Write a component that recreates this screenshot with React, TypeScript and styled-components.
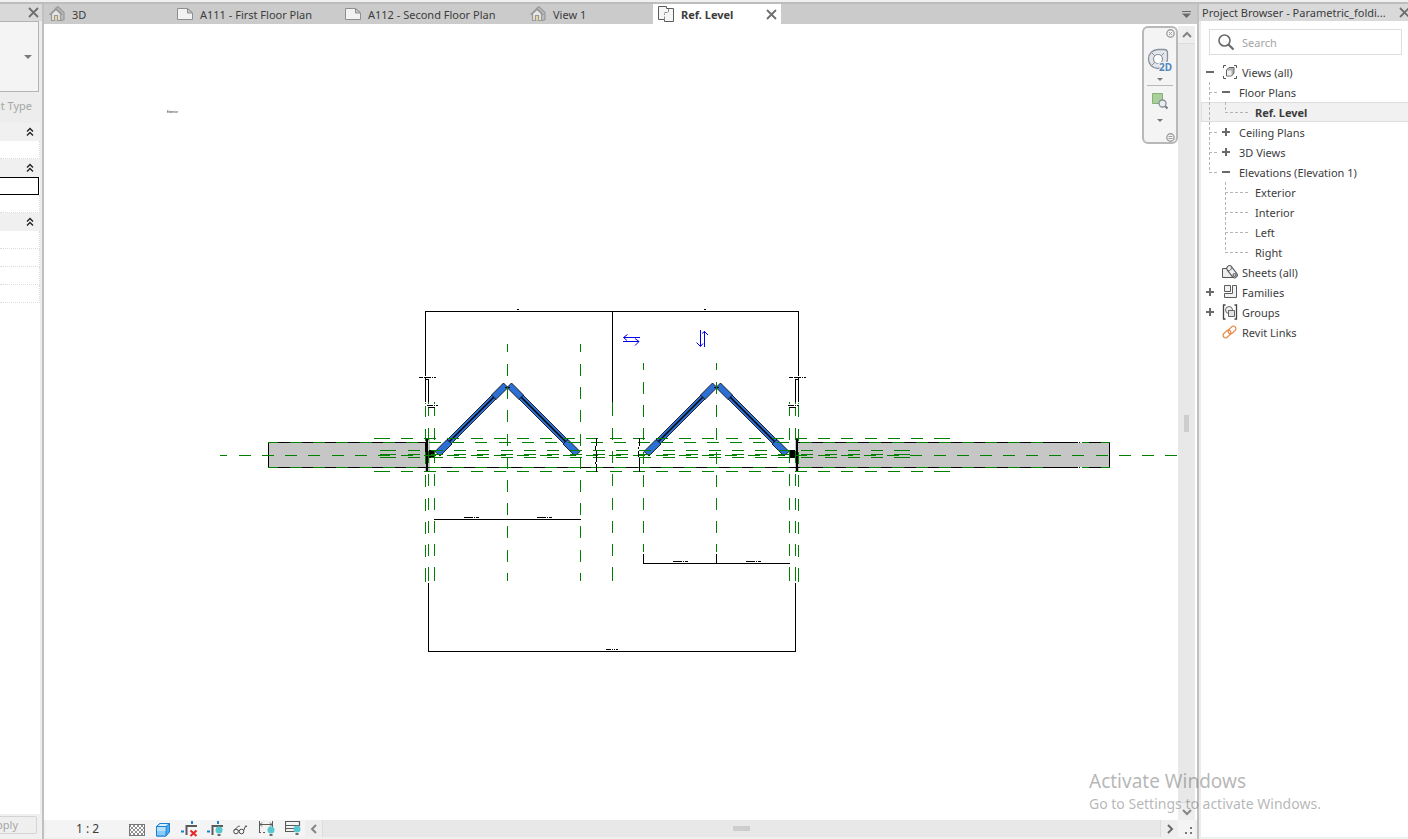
import React from "react";
import styled, { createGlobalStyle, css } from "styled-components";

const GlobalStyle = createGlobalStyle`
  *, *::before, *::after { box-sizing: border-box; }
  body { margin: 0; background: #fff; }
  body, button, input, select {
    font-family: "Noto Sans", "Open Sans", sans-serif;
    font-size: 11px;
    line-height: 16px;
    color: #3c3c3c;
  }
  button { border: 0; padding: 0; background: none; cursor: pointer; }
  ul { list-style: none; margin: 0; padding: 0; }
  svg { display: block; flex: none; }
`;

const Shell = styled.div`
  display: flex;
  flex-direction: column;
  height: 100vh;
  overflow: hidden;
  background: #f0f0f0;
  position: relative;
`;
const TopEdge = styled.div`
  flex: none;
  height: 4px;
  border-top: 2px solid #f0f0f0;
  background: #bdbdbd;
`;
const Columns = styled.div`
  flex: 1;
  display: flex;
  min-height: 0;
`;

/* ---------- left palette ---------- */
const Palette = styled.aside`
  flex: none;
  width: 44px;
  border-right: 2px solid #c0c0c0;
  background: #ededed;
  display: flex;
  flex-direction: column;
  overflow: hidden;
`;
const PaletteTitle = styled.header`
  flex: none;
  height: 17px;
  display: flex;
  justify-content: flex-end;
  align-items: center;
  padding-right: 3px;
  background: #d9d9d9;
`;
const TypeSelector = styled.button`
  flex: none;
  height: 71px;
  width: 39px;
  border: 1px solid #b4b4b4;
  border-left: 0;
  background: #f4f4f4;
  display: flex;
  align-items: center;
  justify-content: flex-end;
  padding-right: 6px;
`;
const EditTypeRow = styled.div`
  flex: none;
  height: 31px;
  display: flex;
  justify-content: flex-end;
  align-items: center;
  padding: 0 10px 4px 0;
`;
const EditType = styled.button`
  flex: none;
  color: #a6a6a6;
  white-space: nowrap;
`;
const Properties = styled.div`
  flex: 1;
  min-height: 0;
  width: 40px;
  background: #fff;
`;
const PropHeader = styled.button`
  display: flex;
  justify-content: flex-end;
  align-items: center;
  width: 100%;
  height: 18px;
  padding-right: 6px;
  background: #f0f0f0;
`;
const PropRow = styled.div`
  height: 18px;
  border-bottom: 1px dotted #dcdcdc;
  border-right: 1px dotted #dcdcdc;
`;
const PropInput = styled.input`
  display: block;
  width: 39px;
  height: 18px;
  border: 1px solid #000;
  border-left: 0;
  padding: 0;
  background: #fff;
`;
const PaletteFooter = styled.footer`
  flex: none;
  height: 25px;
  display: flex;
  justify-content: flex-end;
  align-items: flex-start;
  padding: 2px 5px 0 0;
  background: #f0f0f0;
`;
const ApplyButton = styled.button`
  flex: none;
  width: 75px;
  height: 18px;
  padding-right: 18px;
  text-align: right;
  border: 1px solid #d4d4d4;
  border-radius: 2px;
  background: #efefef;
  color: #a6a6a6;
`;

/* ---------- document area ---------- */
const Workspace = styled.main`
  flex: 1;
  min-width: 0;
  display: flex;
  flex-direction: column;
  background: #fff;
`;
const TabBar = styled.nav`
  flex: none;
  height: 20px;
  display: flex;
  background: #cbcbcb;
`;
const Tab = styled.div<{ $width: number; $active?: boolean }>`
  width: ${(p) => p.$width}px;
  flex: none;
  display: flex;
  align-items: center;
  padding: 0 4px 0 5px;
  background: ${(p) => (p.$active ? "#fff" : "transparent")};
`;
const TabLabel = styled.button<{ $active?: boolean }>`
  flex: 1;
  display: flex;
  align-items: center;
  gap: 7px;
  height: 20px;
  white-space: nowrap;
  font-weight: ${(p) => (p.$active ? 700 : 400)};
`;
const TabText = styled.span`
  padding-top: 2px;
`;
const TabMenu = styled.button`
  margin-left: auto;
  width: 15px;
  display: flex;
  align-items: center;
`;
const ViewRow = styled.div`
  flex: 1;
  min-height: 0;
  display: flex;
  padding-right: 2px;
`;
const Canvas = styled.section`
  flex: 1;
  min-width: 0;
  position: relative;
  overflow: hidden;
`;
const Drawing = styled.svg`
  width: 100%;
  height: 100%;
`;
const NavBar = styled.div`
  position: absolute;
  top: 2px;
  right: 0;
  width: 36px;
  height: 118px;
  border: 2px solid #b8b8b8;
  border-radius: 6px;
  background: #f4f4f4;
  display: flex;
  flex-direction: column;
  align-items: center;
`;
const NavCorner = styled.button`
  align-self: flex-end;
  width: 10px;
  height: 10px;
  display: flex;
  align-items: center;
`;
const NavTool = styled.button`
  width: 28px;
  height: 30px;
  display: flex;
  align-items: center;
  justify-content: center;
`;
const NavDrop = styled.button`
  width: 28px;
  height: 10px;
  display: flex;
  align-items: center;
  justify-content: center;
`;
const NavRule = styled.div`
  width: 26px;
  height: 1px;
  background: #b8b8b8;
`;
const NavFill = styled.div`
  flex: 1;
`;

const VScroll = styled.div`
  flex: none;
  width: 17px;
  margin-top: 2px;
  display: flex;
  flex-direction: column;
  background: #e8e8e8;
`;
const HScroll = styled.div`
  flex: 1;
  display: flex;
  background: #e8e8e8;
`;
const ScrollButton = styled.button`
  flex: none;
  width: 17px;
  height: 17px;
  display: flex;
  align-items: center;
  justify-content: center;
  background: #eeeeee;
`;
const ScrollTrack = styled.div<{ $vertical?: boolean }>`
  flex: 1;
  display: flex;
  align-items: center;
  justify-content: center;
  border: solid #dcdcdc;
  border-width: ${(p) => (p.$vertical ? "1px 0" : "0 1px")};
`;
const ScrollThumb = styled.div<{ $vertical?: boolean }>`
  background: #cdcdcd;
  ${(p) =>
    p.$vertical
      ? css`width: 5px; height: 17px;`
      : css`width: 17px; height: 5px;`}
`;
const ControlBar = styled.div`
  flex: none;
  height: 17px;
  margin: 0 2px 2px 2px;
  display: flex;
  background: #f4f4f4;
`;
const WorkspaceFoot = styled.div`
  background: #f0f0f0;
`;
const ScaleButton = styled.button`
  width: 53px;
  margin-left: 30px;
  text-align: left;
  white-space: pre;
  font-size: 12px;
`;
const ControlIcons = styled.div`
  display: flex;
  gap: 10px;
  width: 176px;
  align-items: center;
`;
const ControlIcon = styled.button`
  width: 16px;
  height: 17px;
`;
const Grip = styled.div`
  flex: none;
  width: 17px;
  padding: 3px 0 0 4px;
  display: flex;
  align-items: center;
  justify-content: center;
`;

/* ---------- project browser ---------- */
const Browser = styled.aside`
  flex: none;
  width: 211px;
  border-left: 2px solid #c0c0c0;
  display: flex;
  flex-direction: column;
`;
const BrowserTitle = styled.header`
  flex: none;
  height: 17px;
  display: flex;
  align-items: center;
  gap: 9px;
  padding-left: 3px;
  background: #d9d9d9;
  white-space: nowrap;
  overflow: hidden;
`;
const BrowserHeading = styled.h2`
  margin: 0;
  width: 188px;
  flex: none;
  font-size: 11px;
  line-height: 16px;
  font-weight: 400;
`;
const BrowserBody = styled.div`
  flex: 1;
  min-height: 0;
  margin-bottom: 2px;
  border-left: 2px solid #ececec;
  background: #fff;
`;
const SearchBox = styled.label`
  display: flex;
  align-items: center;
  gap: 7px;
  height: 26px;
  margin: 8px 6px 7px 8px;
  padding-left: 8px;
  border: 1px solid #dedede;
`;
const SearchInput = styled.input`
  flex: 1;
  min-width: 0;
  border: 0;
  padding: 1px 0 0;
  outline: 0;
  background: none;
  &::placeholder { color: #a4a4a4; opacity: 1; }
`;
const TreeRow = styled.li<{ $selected?: boolean }>`
  display: flex;
  align-items: center;
  height: 20px;
  white-space: nowrap;
  ${(p) =>
    p.$selected &&
    css`
      font-weight: 700;
      background: #f1f1f1;
      box-shadow: inset 0 1px #dedede, inset 0 -1px #dedede, inset 1px 0 #dedede;
    `}
`;
const Guide = styled.span<{ $width: number; $v?: "full" | "half"; $h?: number; $lead?: number }>`
  flex: none;
  height: 20px;
  width: ${(p) => p.$width}px;
  margin-left: ${(p) => p.$lead ?? 0}px;
  background-repeat: no-repeat;
  background-image: repeating-linear-gradient(#b4b4b4 0 3px, transparent 3px 5px),
    repeating-linear-gradient(90deg, #b4b4b4 0 3px, transparent 3px 5px);
  background-position: 0 0, 0 10px;
  background-size: 1px ${(p) => (p.$v === "full" ? 20 : p.$v === "half" ? 11 : 0)}px,
    ${(p) => p.$h ?? 0}px 1px;
`;
const Toggle = styled.button`
  flex: none;
  width: 10px;
  height: 20px;
  display: flex;
  align-items: center;
`;
const RootIcon = styled.span`
  width: 16px;
  margin: 0 4px 0 6px;
`;
const Caption = styled.span<{ $lead?: number }>`
  padding-top: 2px;
  margin-left: ${(p) => p.$lead ?? 0}px;
`;
const Watermark = styled.div`
  position: absolute;
  right: 83px;
  bottom: 24px;
  width: 236px;
  white-space: nowrap;
  pointer-events: none;
  color: rgba(110, 110, 110, 0.5);
`;
const WatermarkTitle = styled.div`
  font-size: 19px;
  line-height: 24px;
`;
const WatermarkText = styled.div`
  font-size: 14px;
  line-height: 22px;
`;

/* ---------- small glyphs ---------- */
const Cross = ({ size = 11, color = "#6e6e6e" }: { size?: number; color?: string }) => (
  <svg width={size} height={size} viewBox="0 0 11 11" fill="none" stroke={color} strokeWidth="1.8">
    <path d="M1 1l9 9M10 1l-9 9" />
  </svg>
);
const Down = ({ w = 8, color = "#7a7a7a" }: { w?: number; color?: string }) => (
  <svg width={w} height={w / 2} viewBox="0 0 8 4" fill={color}>
    <path d="M0 0h8L4 4z" />
  </svg>
);
const Collapse = () => (
  <svg width="8" height="10" viewBox="0 0 8 10" fill="none" stroke="#222" strokeWidth="1.4">
    <path d="M1 4.5l3-3 3 3M1 8.500l3-3 3 3" />
  </svg>
);
const Chevron = ({ turn = 0, color = "#858585" }: { turn?: number; color?: string }) => (
  <svg width="10" height="10" viewBox="0 0 10 10" fill="none" stroke={color} strokeWidth="2">
    <path d="M1 7l4-4 4 4" transform={`rotate(${turn} 5 5)`} />
  </svg>
);
const HouseIcon = () => (
  <svg width="16" height="16" viewBox="0 0 16 16" fill="none" stroke="#999" strokeWidth="1.2">
    <path d="M6.500 2.500L9 .8l6 5.700v7l-3 1.200" fill="#bcbcbc" />
    <path d="M2.500 7.500v7h9v-7L7 3.200z" fill="#e6e6e6" />
    <path d="M.7 8.800L7 2.700l6.300 6.100" strokeWidth="1.600" />
    <path d="M5.500 14.500v-5h3v5" fill="#f3d9a0" />
  </svg>
);
const SheetIcon = () => (
  <svg width="16" height="12" viewBox="0 0 16 12">
    <path d="M.5.5h10l5 4.500v6.500H.5z" fill="#f2f2f2" stroke="#8f8f8f" />
    <path d="M10.500.5v4.500h5z" fill="#c8c8c8" stroke="#8f8f8f" />
  </svg>
);
const PlanIcon = () => (
  <svg width="16" height="16" viewBox="0 0 16 16" fill="#f6f6f6" stroke="#5c5c5c">
    <path d="M.5.5h8v2h7v13h-9v-2h-6z" />
    <path d="M6.500 13.500V7.500M6.500 6.500h4v-4" fill="none" strokeDasharray="3 1.500" stroke="#8a8a8a" />
  </svg>
);
const WheelIcon = () => (
  <svg width="26" height="26" viewBox="0 0 26 26" fill="none" stroke="#8b919b">
    <path d="M11 2.500h6q3.500 0 3.500 3.500v6a9.500 9.500 0 1 1-9.500-9.500z" fill="#e3e6ea" strokeWidth="1.300" />
    <circle cx="11" cy="12" r="4.500" fill="#fff" strokeWidth="1.200" />
    <path d="M5 18l2.800-2.800M14.200 8.800L17 6M5 6l2.800 2.800" />
    <text x="12" y="24" fontSize="10" fontWeight="700" fill="#4f86bd" stroke="#f4f4f4" strokeWidth="2" paintOrder="stroke">2D</text>
  </svg>
);
const ZoomRegionIcon = () => (
  <svg width="18" height="18" viewBox="0 0 18 18" fill="none">
    <path d="M1.500 1.500h10v10h-10z" fill="#abcf9c" stroke="#84b274" />
    <path d="M13.500 13.500l3 3" stroke="#777" strokeWidth="2" />
    <circle cx="11.500" cy="11.500" r="3.500" fill="#e9eef4" stroke="#8a8f98" strokeWidth="1.300" />
  </svg>
);
const RoundGlyph = ({ d }: { d: string }) => (
  <svg width="9" height="9" viewBox="0 0 9 9" fill="none" stroke="#a0a0a0">
    <circle cx="4.500" cy="4.500" r="3.700" strokeWidth="1.400" />
    <path d={d} />
  </svg>
);
const SearchIcon = () => (
  <svg width="17" height="17" viewBox="0 0 17 17" fill="none" stroke="#6a6a6a">
    <circle cx="6.500" cy="6.500" r="5.500" strokeWidth="1.600" />
    <path d="M10.500 10.500l5 5" strokeWidth="2.200" />
  </svg>
);
const Sign = ({ open }: { open: boolean }) => (
  <svg width="8" height="8" viewBox="0 0 8 8" stroke="#6a6a6a" strokeWidth="2">
    <path d={open ? "M0 4h8" : "M0 4h8M4 0v8"} />
  </svg>
);
const ViewsIcon = () => (
  <svg width="16" height="16" viewBox="0 0 16 16" fill="none" stroke="#555">
    <path d="M4 1.500H1.500V4M1.500 12v2.500H4M12 1.500h2.500V4M14.500 12v2.500H12" />
    <path d="M4.500 6L7 3.500h5V9l-2.500 3h-5z" fill="#b0b0b0" stroke="#666" strokeLinejoin="round" />
    <path d="M5 6.500h4.500v5H5z" fill="#f0f0f0" stroke="none" />
  </svg>
);
const SheetsIcon = () => (
  <svg width="16" height="16" viewBox="0 0 16 16" stroke="#555">
    <path d="M.5 4.500h6l6 9H.5z" fill="#ededed" />
    <path d="M7.500 4.500l5 6.500" strokeWidth="6.500" strokeLinecap="round" />
    <path d="M7.500 4.500l5 6.500" stroke="#efefef" strokeWidth="4.500" strokeLinecap="round" />
    <circle cx="12.500" cy="11" r="1.500" fill="#ccc" />
    <path d="M5.500 6.500c2 1 4-1 4-3" fill="none" />
  </svg>
);
const FamiliesIcon = () => (
  <svg width="16" height="16" viewBox="0 0 16 16" fill="#f2f2f2" stroke="#5c5c5c">
    <path d="M2.500 1.500h6v6h-6z" />
    <path d="M10.500 1.500h4v12h-12v-4h8z" />
  </svg>
);
const GroupsIcon = () => (
  <svg width="16" height="16" viewBox="0 0 16 16" fill="none" stroke="#444">
    <path d="M3.500 1H1.500v14h2M12.500 1h2v14h-2" strokeWidth="1.300" />
    <circle cx="7" cy="6" r="3.500" fill="#f0f0f0" stroke="#666" />
    <path d="M6.500 6.500h6v6h-6z" fill="#e2e2e2" stroke="#666" />
    <path d="M6.500 9V6.500H10" stroke="#666" />
  </svg>
);
const LinksIcon = () => (
  <svg width="16" height="16" viewBox="0 0 16 16" fill="none" stroke="#e8833a" strokeWidth="1.200">
    <rect x="-4.500" y="-2.500" width="9" height="5" rx="2.500" transform="translate(5 10) rotate(-45)" />
    <rect x="-4.500" y="-2.500" width="9" height="5" rx="2.500" transform="translate(10 6) rotate(-45)" />
  </svg>
);

/* view control bar glyphs */
const DetailIcon = () => (
  <svg width="16" height="16" viewBox="0 0 16 16" shapeRendering="crispEdges">
    <defs>
      <pattern id="checks" width="4" height="4" patternUnits="userSpaceOnUse">
        <path d="M0 0h2v2H0zM2 2h2v2H2z" fill="#8f8f8f" />
      </pattern>
    </defs>
    <rect x="0" y="3" width="16" height="12" fill="#fff" />
    <rect x="0" y="3" width="16" height="12" fill="url(#checks)" />
    <rect x="0.500" y="3.500" width="15" height="11" fill="none" stroke="#777" />
  </svg>
);
const StyleIcon = () => (
  <svg width="16" height="16" viewBox="0 0 16 16" stroke="#1c7fd4" strokeLinejoin="round">
    <path d="M1.500 5.500L5 2.500h9.500V11L11 15H1.500z" fill="#4fa9ee" />
    <path d="M1.500 5.500H11V15H1.500z" fill="#8accf8" />
    <path d="M2 6h8.500v4H2z" fill="#b9e0fb" stroke="none" />
    <path d="M1.500 5.500L5 2.500h9.500L11 5.500z" fill="#d8effd" />
  </svg>
);
const Bulb = ({ x, y }: { x: number; y: number }) => (
  <g>
    <circle cx={x} cy={y} r="3.500" fill="#58c7cf" />
    <path d={`M${x - 1.5} ${y + 4}h3v2h-3z`} fill="#6a6a6a" />
  </g>
);
const CropBase = () => (
  <>
    <path d="M5.500 15V6H16" fill="none" stroke="#5a5a5a" strokeWidth="2" />
    <path d="M0 11.500h3M11 1v3" stroke="#1b7fd6" strokeWidth="2" />
  </>
);
const CropIcon = () => (
  <svg width="16" height="17" viewBox="0 0 16 17">
    <CropBase />
    <path d="M9.500 10.500l6 5.500M15.500 10.500l-6 5.500" stroke="#e8262a" strokeWidth="2" />
  </svg>
);
const CropShowIcon = () => (
  <svg width="16" height="17" viewBox="0 0 16 17">
    <CropBase />
    <Bulb x={12} y={10} />
  </svg>
);
const GlassesIcon = () => (
  <svg width="16" height="16" viewBox="0 0 16 16" fill="none" stroke="#4a4a4a">
    <circle cx="3" cy="10.500" r="2.300" />
    <circle cx="8.500" cy="10.500" r="2.300" />
    <path d="M5.300 10q.5-1 1 0M1 9.500l4.500-4.500q1-.5 1 .5M10.700 9.500L12.500 5q1-1 1 1" />
  </svg>
);
const RevealIcon = () => (
  <svg width="16" height="17" viewBox="0 0 16 17" fill="none" stroke="#5a5a5a">
    <path d="M.5 1v12M13.500 1v6M1 4.500h12M3 2.500l-2 2 2 2M11 2.500l2 2-2 2" />
    <path d="M0 12.500h8" strokeDasharray="2 2" />
    <g stroke="none"><Bulb x={12} y={10} /></g>
  </svg>
);
const ConstraintIcon = () => (
  <svg width="16" height="17" viewBox="0 0 16 17" fill="none" stroke="#5a5a5a">
    <path d="M.5 1.500h14v4H.5zM.5 8.500h9M.5 11.500h9M.5 5v7" strokeWidth="1.200" />
    <g stroke="none"><Bulb x={12} y={9} /></g>
  </svg>
);

/* ---------- plan drawing ---------- */
const GREEN = "#008000";

type Span = [number, number];
const evenly = (start: number, step: number, count: number, length = 12): Span[] =>
  Array.from({ length: count }, (_, i) => {
    const a = Math.round(start + i * step);
    return [a, a + length] as Span;
  });

const HLine = ({ y, spans, color = "#000" }: { y: number; spans: Span[]; color?: string }) => (
  <path d={spans.map(([a, b]) => `M${a} ${y}H${b}v1H${a}z`).join("")} fill={color} />
);
const VLine = ({ x, spans, color = "#000" }: { x: number; spans: Span[]; color?: string }) => (
  <path d={spans.map(([a, b]) => `M${x} ${a}V${b}h1V${a}z`).join("")} fill={color} />
);

const centreSpans: Span[] = [[220, 227], ...evenly(239, 23.15, 41)];
const outerSpans: Span[] = [[374, 390], ...evenly(401, 23.18, 23), [934, 950]];
const innerSpans: Span[] = [[380, 396], ...evenly(408, 23.14, 21), [894, 910]];
const wallSpans: Span[] = [[268, 278], ...evenly(290, 23.17, 33), [1082, 1089], [1101, 1110]];
const leafSpans: Span[] = [[344, 352], ...evenly(364, 23.2, 9), [573, 581]];
const jambSpans: Span[] = [[402, 404], [407, 416], ...evenly(428, 23.17, 6), [567, 581]];
const edgeSpans: Span[] = [[403, 404], [406, 417], ...evenly(429, 23.17, 6), [568, 582]];
const middleSpans: Span[] = [[402, 416], ...evenly(428, 23.17, 6), [567, 581]];
const rightSpans: Span[] = [[363, 370], ...evenly(382, 23.17, 7), [544, 552]];

const Leaf = ({ transform }: { transform?: string }) => (
  <g transform={transform} stroke="#000" strokeWidth="0.8" fill="#2d6fd2" shapeRendering="geometricPrecision">
    <path d="M447 440L492 395L496 399L451 444z" />
    <path d="M449 442L494 397" strokeWidth="1.500" />
    <path d="M435 451.500L447 439.500L452 444L440 456z" />
    <path d="M491.500 395L503.500 383L508 387.500L496 399.500z" />
  </g>
);

const DimText = ({ x, y }: { x: number; y: number }) => (
  <HLine y={y} spans={[[x, x + 9], [x + 10, x + 11], [x + 12, x + 15]]} />
);

const PlanDrawing = () => (
  <Drawing viewBox="44 24 1134 796" shapeRendering="crispEdges" role="img" aria-label="Ref. Level plan">
    <text x="167" y="113" fontSize="3" fill="#000">Exterior</text>

    <path d="M268 442h159v26H268zM798 442h312v26H798z" fill="#c6c6c6" />
    <path d="M425 439h5v32h-5zM795 439h4v32h-4z" fill="#c6c6c6" />
    <HLine y={442} spans={[[268, 427], [798, 1110]]} />
    <HLine y={467} spans={[[268, 1110]]} />
    <VLine x={268} spans={[[442, 468]]} />
    <VLine x={1109} spans={[[442, 468]]} />

    <Leaf />
    <Leaf transform="matrix(-1 0 0 1 1015 0)" />
    <Leaf transform="translate(209 0)" />
    <Leaf transform="matrix(-1 0 0 1 1224 0)" />
    <HLine y={387} spans={[[505, 510], [714, 719]]} />

    <path d="M426 439h2v32h-2zM796 439h2v32h-2zM429 450h6v8h-6zM790 450h5v8h-5z" />
    <VLine x={425} spans={[[443, 452]]} />

    <HLine y={442} spans={wallSpans} color={GREEN} />
    <HLine y={467} spans={wallSpans} color={GREEN} />
    <HLine y={438} spans={outerSpans} color={GREEN} />
    <HLine y={471} spans={outerSpans} color={GREEN} />
    <HLine y={450} spans={innerSpans} color={GREEN} />
    <HLine y={454} spans={innerSpans} color={GREEN} />
    <HLine y={457} spans={innerSpans} color={GREEN} />
    <HLine y={455} spans={centreSpans} color={GREEN} />
    {[442, 467].map((y) => (
      <g key={y}>
        <HLine y={y} spans={[[1078, 1082]]} color="#fff" />
        <HLine y={y} spans={[[1079, 1080]]} />
      </g>
    ))}

    {[507, 580].map((x) => <VLine key={x} x={x} spans={leafSpans} color={GREEN} />)}
    {[643, 716].map((x) => (
      <g key={x}>
        <VLine x={x} spans={rightSpans} color={GREEN} />
        <VLine x={x} spans={[[554, 564]]} />
      </g>
    ))}
    <VLine x={612} spans={middleSpans} color={GREEN} />
    {[428, 434, 789, 795].map((x) => <VLine key={x} x={x} spans={jambSpans} color={GREEN} />)}
    {[425, 798].map((x) => (
      <g key={x}>
        <VLine x={x} spans={edgeSpans} color={GREEN} />
        <VLine x={x} spans={[[311, 376], [378, 402]]} />
      </g>
    ))}
    {[428, 795].map((x) => <VLine key={x} x={x} spans={[[379, 402], [583, 652]]} />)}

    <HLine y={311} spans={[[425, 799]]} />
    <HLine y={309} spans={[[517, 519], [704, 706]]} />
    <VLine x={612} spans={[[311, 402]]} />
    <HLine y={377} spans={[[419, 423], [424, 431], [432, 433], [434, 436]]} />
    <HLine y={377} spans={[[789, 793], [794, 801], [802, 803], [804, 806]]} />
    <HLine y={379} spans={[[425, 429], [795, 799]]} />
    <HLine y={405} spans={[[427, 433], [434, 435], [436, 438], [788, 794], [795, 796], [797, 799]]} />
    <HLine y={407} spans={[[428, 435], [789, 796]]} />

    <VLine x={596} spans={[[438, 446], [451, 462], [464, 472]]} />
    <VLine x={595} spans={[[446, 450], [462, 464]]} />
    <VLine x={639} spans={[[438, 446], [458, 472]]} />
    <VLine x={638} spans={[[447, 449], [451, 457]]} />

    <HLine y={519} spans={[[434, 581]]} />
    <DimText x={464} y={517} />
    <DimText x={537} y={517} />
    <HLine y={563} spans={[[643, 790]]} />
    <DimText x={673} y={561} />
    <DimText x={746} y={561} />
    <HLine y={651} spans={[[428, 796]]} />
    <HLine y={649} spans={[[606, 611], [612, 613], [614, 615], [616, 618]]} />

    <g fill="none" stroke="#0000f0">
      <path d="M624 337.500h16M623 341.500h16" />
      <path d="M700.500 330v16M704.500 331v16" />
      <path
        d="M627.500 334.500l-4 3 3.500 3M635 338.500l4 3-4 4M696.500 342.500l4 4 2.500-3M702 333.500l2.500-2 3.500 3.500"
        shapeRendering="geometricPrecision"
      />
    </g>
  </Drawing>
);

/* ---------- data ---------- */
const tabs = [
  { label: "3D", width: 128, icon: <HouseIcon /> },
  { label: "A111 - First Floor Plan", width: 168, icon: <SheetIcon /> },
  { label: "A112 - Second Floor Plan", width: 185, icon: <SheetIcon /> },
  { label: "View 1", width: 128, icon: <HouseIcon /> },
  { label: "Ref. Level", width: 128, icon: <PlanIcon />, active: true },
];

const controls = [
  ["Detail Level", <DetailIcon />],
  ["Visual Style", <StyleIcon />],
  ["Crop View", <CropIcon />],
  ["Show Crop Region", <CropShowIcon />],
  ["Temporary Hide/Isolate", <GlassesIcon />],
  ["Reveal Hidden Elements", <RevealIcon />],
  ["Reveal Constraints", <ConstraintIcon />],
] as const;

const RootItem = ({ label, icon, open }: { label: string; icon: React.ReactNode; open?: boolean }) => (
  <TreeRow>
    <Guide $width={5} />
    {open === undefined ? <Guide $width={10} /> : (
      <Toggle aria-label={`Toggle ${label}`}><Sign open={open} /></Toggle>
    )}
    <RootIcon>{icon}</RootIcon>
    <Caption>{label}</Caption>
  </TreeRow>
);
const GroupItem = ({ label, open, last }: { label: string; open: boolean; last?: boolean }) => (
  <TreeRow>
    <Guide $lead={8} $width={13} $v={last ? "half" : "full"} $h={9} />
    <Toggle aria-label={`Toggle ${label}`}><Sign open={open} /></Toggle>
    <Caption $lead={7}>{label}</Caption>
  </TreeRow>
);
const ViewItem = ({ label, last, selected, within }: { label: string; last?: boolean; selected?: boolean; within?: boolean }) => (
  <TreeRow $selected={selected}>
    <Guide $lead={8} $width={16} $v={within ? "full" : undefined} />
    <Guide $width={25} $v={last ? "half" : "full"} $h={25} />
    <Caption $lead={5}>{label}</Caption>
  </TreeRow>
);

export default function App() {
  return (
    <Shell>
      <GlobalStyle />
      <TopEdge />
      <Columns>
        <Palette>
          <PaletteTitle><button aria-label="Close properties"><Cross /></button></PaletteTitle>
          <TypeSelector aria-label="Type selector"><Down /></TypeSelector>
          <EditTypeRow><EditType disabled>Edit Type</EditType></EditTypeRow>
          <Properties>
            <PropHeader aria-label="Collapse group"><Collapse /></PropHeader>
            <PropRow />
            <PropHeader aria-label="Collapse group"><Collapse /></PropHeader>
            <PropInput aria-label="Property value" />
            <PropRow />
            <PropHeader aria-label="Collapse group"><Collapse /></PropHeader>
            <PropRow /><PropRow /><PropRow /><PropRow />
          </Properties>
          <PaletteFooter><ApplyButton disabled>Apply</ApplyButton></PaletteFooter>
        </Palette>

        <Workspace>
          <TabBar>
            {tabs.map((t) => (
              <Tab key={t.label} $width={t.width} $active={t.active}>
                <TabLabel $active={t.active}>{t.icon}<TabText>{t.label}</TabText></TabLabel>
                {t.active && <button aria-label="Close view"><Cross /></button>}
              </Tab>
            ))}
            <TabMenu aria-label="View list">
              <svg width="9" height="7" viewBox="0 0 9 7" fill="#6a6a6a"><path d="M0 0h9v1H0zM0 2.500h9L4.500 7z" /></svg>
            </TabMenu>
          </TabBar>
          <ViewRow>
            <Canvas>
              <PlanDrawing />
              <NavBar>
                <NavCorner aria-label="Close navigation bar"><RoundGlyph d="M3 3l3 3M6 3l-3 3" /></NavCorner>
                <NavFill />
                <NavTool aria-label="Steering wheel 2D"><WheelIcon /></NavTool>
                <NavDrop aria-label="Wheel options"><Down w={6} /></NavDrop>
                <NavRule />
                <NavTool aria-label="Zoom region"><ZoomRegionIcon /></NavTool>
                <NavDrop aria-label="Zoom options"><Down w={6} /></NavDrop>
                <NavFill />
                <NavCorner aria-label="Customize"><RoundGlyph d="M2.500 3.500h4M2.500 5.500h4" /></NavCorner>
              </NavBar>
            </Canvas>
            <VScroll>
              <ScrollButton aria-label="Scroll up"><Chevron /></ScrollButton>
              <ScrollTrack $vertical><ScrollThumb $vertical /></ScrollTrack>
              <ScrollButton aria-label="Scroll down"><Chevron turn={180} /></ScrollButton>
            </VScroll>
          </ViewRow>
          <WorkspaceFoot>
            <ControlBar>
              <ScaleButton>1 : 2</ScaleButton>
              <ControlIcons>
                {controls.map(([name, icon]) => (
                  <ControlIcon key={name} aria-label={name}>{icon}</ControlIcon>
                ))}
              </ControlIcons>
              <HScroll>
                <ScrollButton aria-label="Scroll left"><Chevron turn={-90} /></ScrollButton>
                <ScrollTrack><ScrollThumb /></ScrollTrack>
                <ScrollButton aria-label="Scroll right"><Chevron turn={90} color="#6a6a6a" /></ScrollButton>
              </HScroll>
              <Grip>
                <svg width="7" height="7" viewBox="0 0 7 7" fill="#777"><path d="M5 0h2v2H5zM5 5h2v2H5zM0 5h2v2H0z" /></svg>
              </Grip>
            </ControlBar>
          </WorkspaceFoot>
        </Workspace>

        <Browser>
          <BrowserTitle>
            <BrowserHeading>Project Browser - Parametric_foldi...</BrowserHeading>
            <button aria-label="Close project browser"><Cross /></button>
          </BrowserTitle>
          <BrowserBody>
            <SearchBox>
              <SearchIcon />
              <SearchInput placeholder="Search" aria-label="Search" />
            </SearchBox>
            <ul>
              <RootItem label="Views (all)" icon={<ViewsIcon />} open />
              <GroupItem label="Floor Plans" open />
              <ViewItem label="Ref. Level" selected last within />
              <GroupItem label="Ceiling Plans" open={false} />
              <GroupItem label="3D Views" open={false} />
              <GroupItem label="Elevations (Elevation 1)" open last />
              <ViewItem label="Exterior" />
              <ViewItem label="Interior" />
              <ViewItem label="Left" />
              <ViewItem label="Right" last />
              <RootItem label="Sheets (all)" icon={<SheetsIcon />} />
              <RootItem label="Families" icon={<FamiliesIcon />} open={false} />
              <RootItem label="Groups" icon={<GroupsIcon />} open={false} />
              <RootItem label="Revit Links" icon={<LinksIcon />} />
            </ul>
          </BrowserBody>
        </Browser>
      </Columns>
      <Watermark>
        <WatermarkTitle>Activate Windows</WatermarkTitle>
        <WatermarkText>Go to Settings to activate Windows.</WatermarkText>
      </Watermark>
    </Shell>
  );
}
